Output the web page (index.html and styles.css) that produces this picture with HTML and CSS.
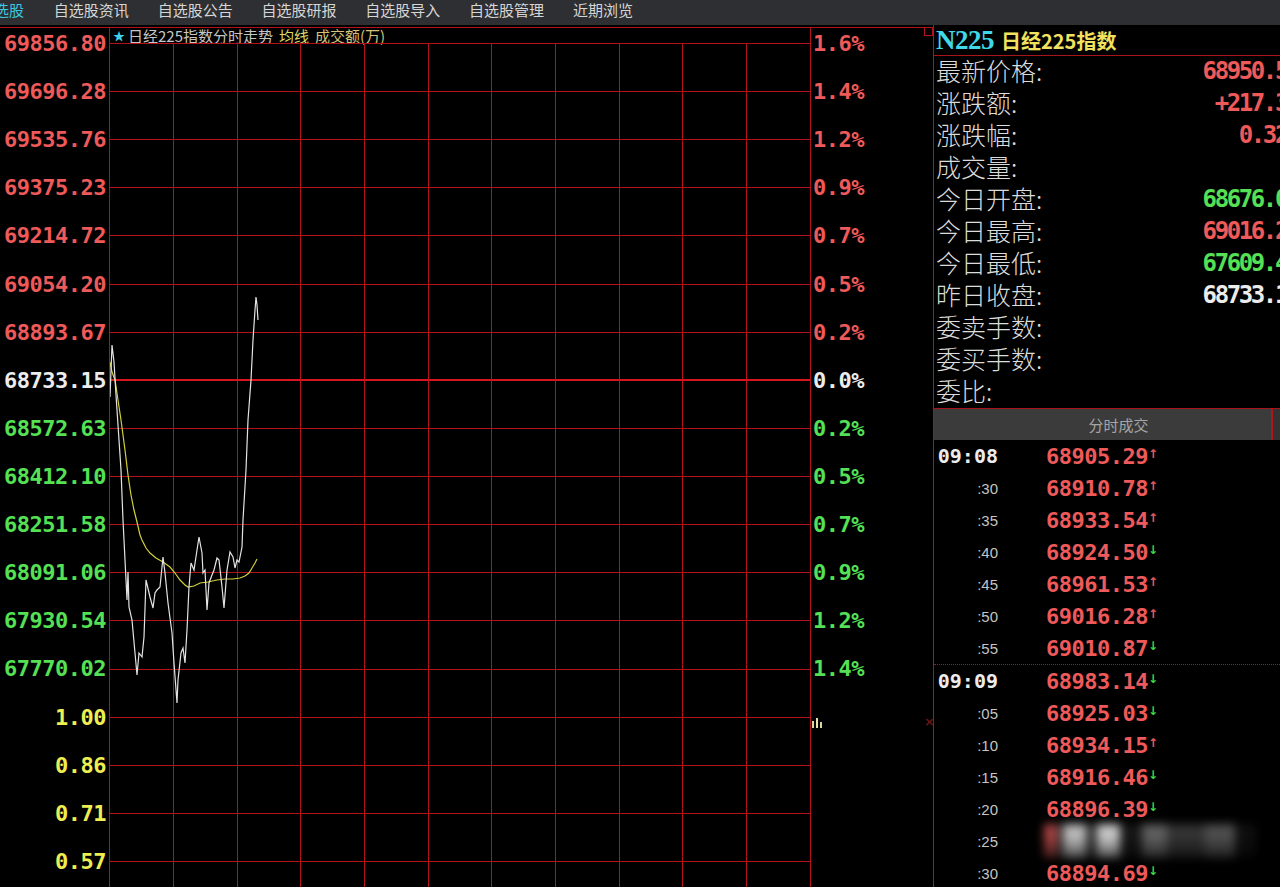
FILE: index.html
```html
<!DOCTYPE html>
<html lang="zh-CN">
<head>
    <meta charset="UTF-8">
    <meta name="viewport" content="width=device-width, initial-scale=1.0">
    <title>日经225指数 分时走势</title>
    <link rel="stylesheet" href="styles.css">
</head>
<body>

    <div class="menubar">
        <span class="menu-item active">选股</span>
        <span class="menu-item">自选股资讯</span>
        <span class="menu-item">自选股公告</span>
        <span class="menu-item">自选股研报</span>
        <span class="menu-item">自选股导入</span>
        <span class="menu-item">自选股管理</span>
        <span class="menu-item">近期浏览</span>
    </div>

    <div class="main">
        <section class="chart">
            <div class="axis axis-left">
                <div class="tick up">69856.80</div>
                <div class="tick up">69696.28</div>
                <div class="tick up">69535.76</div>
                <div class="tick up">69375.23</div>
                <div class="tick up">69214.72</div>
                <div class="tick up">69054.20</div>
                <div class="tick up">68893.67</div>
                <div class="tick flat">68733.15</div>
                <div class="tick down">68572.63</div>
                <div class="tick down">68412.10</div>
                <div class="tick down">68251.58</div>
                <div class="tick down">68091.06</div>
                <div class="tick down">67930.54</div>
                <div class="tick down">67770.02</div>
                <div class="tick vol">1.00</div>
                <div class="tick vol">0.86</div>
                <div class="tick vol">0.71</div>
                <div class="tick vol">0.57</div>
            </div>

            <div class="plot">
                <div class="plot-title">
                    <span class="star">★</span>
                    <span class="title-name">日经225指数分时走势</span>
                    <span class="title-avg">均线</span>
                    <span class="title-vol">成交额(万)</span>
                </div>
                <div class="plot-body">
                    <svg class="grid" width="700" height="844" viewBox="110 43 700 844">
                        <path stroke="#b3121c" stroke-width="1" fill="none" shape-rendering="crispEdges"
                              d="M110 43.5H810 M110 91.5H810 M110 139.5H810 M110 187.5H810 M110 235.5H810 M110 284.5H810 M110 332.5H810
                                 M110 428.5H810 M110 476.5H810 M110 524.5H810 M110 572.5H810 M110 620.5H810 M110 669.5H810
                                 M110 717.5H810 M110 765.5H810 M110 813.5H810 M110 861.5H810
                                 M173.5 43V887 M237.5 43V887 M300.5 43V887 M364.5 43V887 M428.5 43V887
                                 M491.5 43V887 M555.5 43V887 M619.5 43V887 M682.5 43V887 M746.5 43V887"/>
                        <path stroke="#d8141f" stroke-width="2" shape-rendering="crispEdges" d="M110 380H810"/>
                    </svg>
                    <svg class="lines" width="700" height="844" viewBox="110 43 700 844">
                        <!-- average -->
                        <polyline fill="none" stroke="#d4cf3a" stroke-width="1.2"
                                  points="110,362 112,372 115,380 118,400 121,420 125,450 128,475 131,495 134,510 137,522 140,535 142,540 146,548 150,553 156,558 163,562 170,567 175,573 180,580 185,585 188,587 194,586 200,583 208,582 217,580 225,579 233,579 240,578 245,576 249,573 252,568 255,563 257,559"/>
                        <!-- price -->
                        <polyline fill="none" stroke="#e4e4e4" stroke-width="1.2"
                                  points="110,397 112,345 114,362 116,395 118,425 121,470 123,520 125,560 127,600 128,572 129,607 132,620 135,653 137,675 139,653 142,657 144,637 146,580 150,597 153,608 155,593 157,590 160,587 163,557 165,573 168,603 172,633 174,663 177,703 178,680 181,653 183,648 185,663 187,630 189,587 191,563 194,570 197,550 199,537 202,553 203,573 205,570 207,610 209,583 212,575 214,570 217,558 219,560 222,587 224,608 227,570 230,552 233,557 235,568 237,560 239,562 242,547 243,520 246,470 248,420 251,380 253,340 255,310 256,297 257,305 258,320"/>
                    </svg>
                </div>
            </div>

            <div class="axis axis-right">
                <div class="tick up">1.6%</div>
                <div class="tick up">1.4%</div>
                <div class="tick up">1.2%</div>
                <div class="tick up">0.9%</div>
                <div class="tick up">0.7%</div>
                <div class="tick up">0.5%</div>
                <div class="tick up">0.2%</div>
                <div class="tick flat">0.0%</div>
                <div class="tick down">0.2%</div>
                <div class="tick down">0.5%</div>
                <div class="tick down">0.7%</div>
                <div class="tick down">0.9%</div>
                <div class="tick down">1.2%</div>
                <div class="tick down">1.4%</div>

                <span class="corner-box"></span>
                <svg class="vol-icon" width="11" height="10" viewBox="0 0 11 10">
                    <rect x="0" y="3" width="2" height="7" fill="#d8d49a"/>
                    <rect x="4" y="0" width="2" height="10" fill="#e8e4b0"/>
                    <rect x="8" y="4" width="2" height="6" fill="#d8d49a"/>
                </svg>
                <span class="close-mark">×</span>
            </div>
        </section>

        <aside class="quote">
            <div class="quote-head">
                <span class="code">N225</span>
                <span class="name">日经225指数</span>
            </div>

            <div class="fields">
                <div class="field"><span class="label">最新价格:</span><span class="val up">68950.54</span></div>
                <div class="field"><span class="label">涨跌额:</span><span class="val up">+217.39</span></div>
                <div class="field"><span class="label">涨跌幅:</span><span class="val up">0.32%</span></div>
                <div class="field"><span class="label">成交量:</span><span class="val"></span></div>
                <div class="field"><span class="label">今日开盘:</span><span class="val down">68676.03</span></div>
                <div class="field"><span class="label">今日最高:</span><span class="val up">69016.28</span></div>
                <div class="field"><span class="label">今日最低:</span><span class="val down">67609.41</span></div>
                <div class="field"><span class="label">昨日收盘:</span><span class="val flat">68733.15</span></div>
                <div class="field"><span class="label">委卖手数:</span><span class="val"></span></div>
                <div class="field"><span class="label">委买手数:</span><span class="val"></span></div>
                <div class="field"><span class="label">委比:</span><span class="val"></span></div>
            </div>

            <div class="tabs">
                <div class="tab">分时成交</div>
                <div class="tab-rest"></div>
            </div>

            <div class="ticks">
                <div class="tick-group">
                    <div class="tick-row"><span class="time minute">09:08</span><span class="price">68905.29</span><span class="arrow rise">↑</span></div>
                    <div class="tick-row"><span class="time">:30</span><span class="price">68910.78</span><span class="arrow rise">↑</span></div>
                    <div class="tick-row"><span class="time">:35</span><span class="price">68933.54</span><span class="arrow rise">↑</span></div>
                    <div class="tick-row"><span class="time">:40</span><span class="price">68924.50</span><span class="arrow fall">↓</span></div>
                    <div class="tick-row"><span class="time">:45</span><span class="price">68961.53</span><span class="arrow rise">↑</span></div>
                    <div class="tick-row"><span class="time">:50</span><span class="price">69016.28</span><span class="arrow rise">↑</span></div>
                    <div class="tick-row"><span class="time">:55</span><span class="price">69010.87</span><span class="arrow fall">↓</span></div>
                </div>
                <div class="tick-group next">
                    <div class="tick-row"><span class="time minute">09:09</span><span class="price">68983.14</span><span class="arrow fall">↓</span></div>
                    <div class="tick-row"><span class="time">:05</span><span class="price">68925.03</span><span class="arrow fall">↓</span></div>
                    <div class="tick-row"><span class="time">:10</span><span class="price">68934.15</span><span class="arrow rise">↑</span></div>
                    <div class="tick-row"><span class="time">:15</span><span class="price">68916.46</span><span class="arrow fall">↓</span></div>
                    <div class="tick-row"><span class="time">:20</span><span class="price">68896.39</span><span class="arrow fall">↓</span></div>
                    <div class="tick-row"><span class="time">:25</span><span class="smudge"></span></div>
                    <div class="tick-row"><span class="time">:30</span><span class="price">68894.69</span><span class="arrow fall">↓</span></div>
                </div>
            </div>
        </aside>
    </div>

</body>
</html>
```

FILE: styles.css
```css
body {
    margin: 0;
    background: #000;
    overflow: hidden;
    font-family: "Noto Sans CJK SC", sans-serif;
}

/* top menu */
.menubar {
    height: 25px;
    background: #2d2f32;
    display: flex;
    gap: 28.8px;
    color: #d6d6d6;
    font-size: 15px;
    line-height: 19px;
    white-space: nowrap;
    overflow: hidden;
}
.menu-item.active {
    margin-left: -6px;
    margin-right: 1px;
    color: #3cc8e0;
}

.main {
    display: flex;
    width: 1304px;
    height: 862px;
}

/* chart */
.chart {
    display: flex;
    width: 933px;
    margin-top: 2px;
    border-top: 1px solid #b3121c;
}
.axis {
    box-sizing: border-box;
    padding-top: 5px;
    font-family: "DejaVu Sans Mono", monospace;
    font-weight: bold;
    font-size: 22px;
    letter-spacing: -0.5px;
}
.axis-left {
    width: 109px;
    padding-right: 3px;
    text-align: right;
}
.axis-right {
    width: 122px;
    padding-left: 2px;
    position: relative;
}
.tick {
    height: 48.12px;
    line-height: 21px;
}
.up { color: #ee5a5a; }
.down { color: #55e055; }
.flat { color: #ececec; }
.vol { color: #eeee52; }

.plot {
    width: 702px;
    box-sizing: border-box;
    border-left: 1px solid #b3121c;
    border-right: 1px solid #b3121c;
}
.plot-title {
    height: 15px;
    display: flex;
    align-items: center;
    gap: 6px;
    padding-left: 3px;
    white-space: nowrap;
    font-size: 15px;
    line-height: 15px;
}
.star {
    color: #3fd0f0;
    font-size: 12px;
    margin-right: -3px;
}
.title-name { color: #c6c6c6; }
.title-avg { color: #dcd866; }
.title-vol { color: #d4c27a; }

.plot-body {
    position: relative;
    height: 844px;
}
.grid { display: block; }
.lines {
    position: absolute;
    left: 0;
    top: 0;
}

.corner-box {
    position: absolute;
    top: -1px;
    right: 0;
    width: 7px;
    height: 7px;
    border: 1px solid #b3121c;
}
.vol-icon {
    position: absolute;
    left: 1px;
    top: 690px;
}
.close-mark {
    position: absolute;
    left: 113px;
    top: 686px;
    color: #6a1414;
    font-family: "DejaVu Sans", sans-serif;
    font-size: 13px;
}

/* quote panel */
.quote {
    width: 371px;
    box-sizing: border-box;
    border-left: 1px solid #b3121c;
}
.quote-head {
    height: 30px;
    display: flex;
    align-items: center;
    gap: 7px;
    padding-left: 2px;
    border-bottom: 1px solid #a8141c;
}
.code {
    color: #3fd8e8;
    font-family: "Liberation Serif", serif;
    font-weight: bold;
    font-size: 27px;
    letter-spacing: -0.5px;
}
.name {
    color: #f0e25e;
    font-weight: bold;
    font-size: 20px;
}

.field {
    height: 32px;
    display: flex;
    justify-content: space-between;
    align-items: center;
    padding: 0 5px 0 2px;
}
.label {
    color: #dcdcdc;
    font-size: 25px;
    font-weight: 300;
    line-height: 28px;
    padding-bottom: 4px;
}
.val {
    font-family: "DejaVu Sans Mono", monospace;
    font-weight: bold;
    font-size: 24px;
    letter-spacing: -2.4px;
    line-height: 28px;
    padding-bottom: 2px;
}

.tabs {
    display: flex;
    height: 31px;
    border-top: 1px solid #a8141c;
}
.tab {
    width: 339px;
    box-sizing: border-box;
    padding-left: 32px;
    background: #3b3b3b;
    border-right: 2px solid #b0141e;
    color: #a6a6a6;
    font-size: 15px;
    line-height: 31px;
    text-align: center;
}
.tab-rest {
    flex: 1;
    background: #333;
}

.tick-group.next {
    border-top: 1px dotted #7a2a2a;
}
.tick-row {
    height: 32px;
    display: flex;
    align-items: center;
    padding-left: 2px;
}
.time {
    width: 62px;
    text-align: right;
    color: #c4c4c4;
    font-family: "Liberation Sans", sans-serif;
    font-size: 15px;
}
.time.minute {
    color: #ececec;
    font-family: "DejaVu Sans Mono", monospace;
    font-weight: bold;
    font-size: 20px;
}
.price {
    margin-left: 48px;
    color: #ee5a5a;
    font-family: "DejaVu Sans Mono", monospace;
    font-weight: bold;
    font-size: 22px;
    letter-spacing: -0.5px;
}
.arrow {
    align-self: flex-start;
    margin-top: 7px;
    font-family: "DejaVu Sans", sans-serif;
    font-weight: bold;
    font-size: 12px;
}
.arrow.rise { color: #ee5a5a; }
.arrow.fall { color: #3fd83f; }

.smudge {
    margin-left: 46px;
    width: 212px;
    height: 34px;
    background:
        linear-gradient(180deg, rgba(0,0,0,0) 0 40%, rgba(0,0,0,0.6) 100%),
        linear-gradient(90deg, #c85050 0 6%, #2a2a2a 6% 9%, #d8d8d8 9% 20%, #3a3a3a 20% 25%, #e8e8e8 25% 36%, #1a1a1a 36% 46%, #6e6e6e 46% 58%, #3c3c3c 58% 76%, #5a5a5a 76% 90%, #111 90%);
    filter: blur(5px);
    opacity: 0.85;
}
```
